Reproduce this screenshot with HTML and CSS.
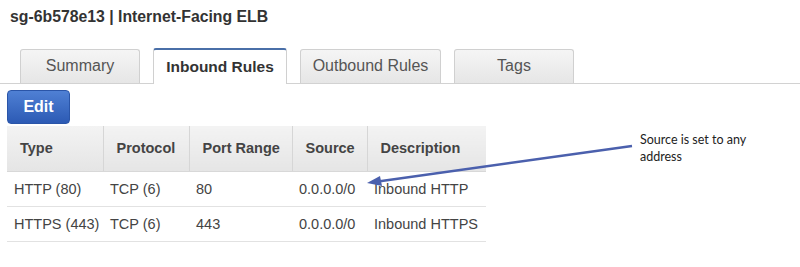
FILE: index.html
```html
<!DOCTYPE html>
<html lang="en">
<head>
<meta charset="UTF-8">
<title>sg-6b578e13 | Internet-Facing ELB</title>
<link rel="stylesheet" href="styles.css">
</head>
<body>

<div class="page">
    <h1 class="sg-title">sg-6b578e13 | Internet-Facing ELB</h1>

    <div class="tabs">
        <div class="tab tab-summary">Summary</div>
        <div class="tab tab-inbound active">Inbound Rules</div>
        <div class="tab tab-outbound">Outbound Rules</div>
        <div class="tab tab-tags">Tags</div>
    </div>

    <button class="edit-btn">Edit</button>

    <table class="rules">
        <thead>
            <tr>
                <th class="c-type">Type</th>
                <th class="c-proto">Protocol</th>
                <th class="c-port">Port Range</th>
                <th class="c-src">Source</th>
                <th class="c-desc">Description</th>
            </tr>
        </thead>
        <tbody>
            <tr>
                <td>HTTP (80)</td>
                <td>TCP (6)</td>
                <td>80</td>
                <td>0.0.0.0/0</td>
                <td>Inbound HTTP</td>
            </tr>
            <tr>
                <td>HTTPS (443)</td>
                <td>TCP (6)</td>
                <td>443</td>
                <td>0.0.0.0/0</td>
                <td>Inbound HTTPS</td>
            </tr>
        </tbody>
    </table>

    <!-- annotation drawn over the table -->
    <svg class="callout-arrow" width="800" height="267" viewBox="0 0 800 267">
        <line x1="632" y1="146" x2="378" y2="181.5" stroke="#4b60ad" stroke-width="2.5"/>
        <polygon points="367,183 380,176 382,186" fill="#4b60ad"/>
    </svg>
    <div class="callout-text">Source is set to any<br>address</div>
</div>

</body>
</html>
```

FILE: styles.css
```css
body {
    margin: 0;
    background: #fff;
    font-family: "Liberation Sans", Arial, sans-serif;
    color: #444;
}
.page {
    position: relative;
    width: 800px;
    height: 267px;
    overflow: hidden;
}
.sg-title {
    margin: 0;
    padding: 7px 0 0 10px;
    font-size: 15.8px;
    line-height: 20px;
    font-weight: bold;
    color: #333;
}
.tabs {
    display: flex;
    gap: 13px;
    margin-top: 22px;
    padding-left: 20px;
    height: 34px;
    border-bottom: 1px solid #d2d2d2;
    align-items: flex-end;
}
.tab {
    box-sizing: border-box;
    height: 34px;
    border: 1px solid #d0d0d0;
    border-bottom: none;
    border-radius: 3px 3px 0 0;
    background: linear-gradient(#f5f5f5, #e6e6e6);
    color: #555;
    font-size: 16px;
    text-align: center;
    line-height: 32px;
}
.tab-summary { width: 120px; }
.tab-inbound { width: 134px; }
.tab-outbound { width: 141px; }
.tab-tags { width: 120px; }
.tab.active {
    height: 36px;
    margin-bottom: -1px;
    background: #fff;
    border-top: 2px solid #4a6fa8;
    color: #333;
    font-size: 15.5px;
    font-weight: bold;
    line-height: 34px;
}
.edit-btn {
    display: block;
    margin: 6px 0 0 7px;
    width: 63px;
    height: 34px;
    border: 1px solid #2a55a8;
    border-radius: 4px;
    background: linear-gradient(#4f80d4, #2c5ab4);
    color: #fff;
    font-family: "Liberation Sans", Arial, sans-serif;
    font-size: 16px;
    font-weight: bold;
    padding: 0;
}
.rules {
    margin: 2px 0 0 7px;
    border-collapse: collapse;
    width: 479px;
    font-size: 14.5px;
}
.rules th {
    height: 45px;
    padding: 0 0 0 13px;
    text-align: left;
    font-weight: bold;
    color: #444;
    background: linear-gradient(#f3f3f3, #e5e5e5);
    border-left: 1px solid #d6d6d6;
    border-bottom: 1px solid #d8d8d8;
    box-sizing: border-box;
}
.rules th:first-child { border-left: none; }
.rules td {
    height: 35px;
    padding: 0 0 0 7px;
    border-bottom: 1px solid #e2e2e2;
    color: #444;
    box-sizing: border-box;
}
.c-type { width: 96px; }
.c-proto { width: 86px; }
.c-port { width: 103px; }
.c-src { width: 75px; }
.c-desc { width: 119px; }
.callout-arrow {
    position: absolute;
    left: 0;
    top: 0;
}
.callout-text {
    position: absolute;
    left: 640px;
    top: 131px;
    font-family: Lato, "Open Sans", sans-serif;
    font-size: 12.5px;
    line-height: 17px;
    color: #222;
}
```
